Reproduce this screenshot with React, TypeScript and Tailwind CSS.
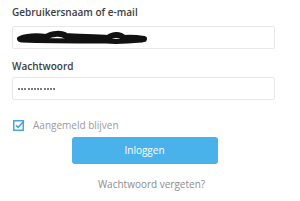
export default function App() {
  const dots = Array.from({ length: 12 });
  return (
    <div className="w-[300px] h-[201px] bg-white overflow-hidden" style={{ fontFamily: "'Open Sans', Lato, sans-serif" }}>
      <div className="flex flex-col w-[263px] ml-[12px] pt-[5px]">
        <div className="h-[14px] leading-[14px] text-[10px] font-semibold text-[#3d3d3d]">Gebruikersnaam of e-mail</div>
        <div className="mt-[7px] h-[23px] border border-[#e8e8e8] rounded-[2px] relative">
          <svg width="132" height="16" viewBox="0 0 132 16" className="absolute left-[3px] top-[3px]">
            <path d="M4 9 C12 6,22 6,30 7 C36 3,46 3,50 6 C60 7,80 7,92 8 C97 4,104 4,108 8 C116 7,122 8,128 9" stroke="#111" strokeWidth="6" fill="none" strokeLinecap="round" strokeLinejoin="round" />
            <path d="M6 10 C30 11,60 11,90 11 C100 12,115 11,126 10" stroke="#111" strokeWidth="5" fill="none" strokeLinecap="round" />
          </svg>
        </div>
        <div className="mt-[10px] h-[14px] leading-[14px] text-[10px] font-semibold text-[#3d3d3d]">Wachtwoord</div>
        <div className="mt-[4px] h-[23px] border border-[#e8e8e8] rounded-[2px] flex items-center pl-[5px] gap-[1.2px]">
          {dots.map((_, i) => (
            <div key={i} className="w-[2px] h-[2px] rounded-full bg-[#555]" />
          ))}
        </div>
        <div className="mt-[18px] h-[14px] flex items-center">
          <svg width="12" height="12" viewBox="0 0 12 12" className="ml-[1px]">
            <rect x="0.75" y="1.75" width="9.5" height="9.5" fill="none" stroke="#4aa5de" strokeWidth="1.5" />
            <path d="M3 6.3 L5.2 8.4 L11 2" fill="none" stroke="#4aa5de" strokeWidth="1.6" />
          </svg>
          <span className="ml-[8px] text-[10px] text-[#9a9a9a]">Aangemeld blijven</span>
        </div>
        <button className="mt-[5px] self-center w-[146px] h-[27px] rounded-[3px] bg-[#4ab2eb] text-white text-[10px] ml-[2px]">Inloggen</button>
        <div className="mt-[13px] text-center leading-[15px] text-[10px] text-[#8c8c8c] pl-[16px]">Wachtwoord vergeten?</div>
      </div>
    </div>
  );
}
